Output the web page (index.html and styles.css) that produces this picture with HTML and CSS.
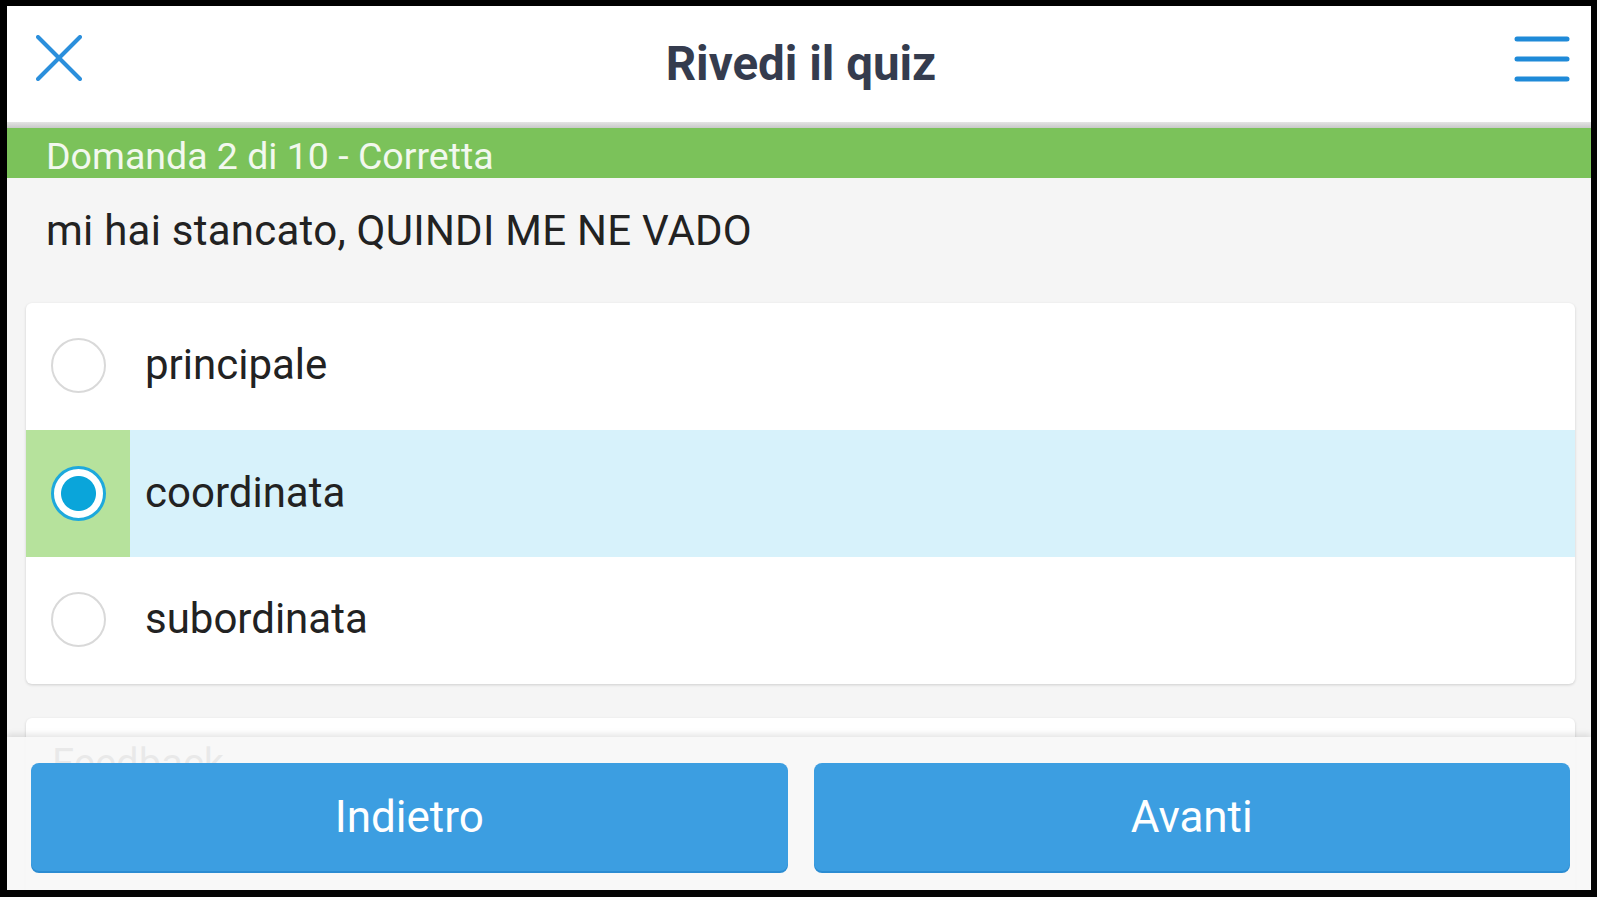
FILE: index.html
```html
<!DOCTYPE html>
<html lang="it">
<head>
<meta charset="utf-8">
<title>Rivedi il quiz</title>
<link rel="stylesheet" href="styles.css">
</head>
<body>
<div class="frame">
  <div class="app">
    <header class="topbar">
      <svg class="icon-close" width="46" height="46" viewBox="0 0 46 46">
        <line x1="2" y1="2" x2="44" y2="44" stroke="#2b8fdc" stroke-width="4" stroke-linecap="round"/>
        <line x1="44" y1="2" x2="2" y2="44" stroke="#2b8fdc" stroke-width="4" stroke-linecap="round"/>
      </svg>
      <h1 class="title">Rivedi il quiz</h1>
      <svg class="icon-menu" width="56" height="50" viewBox="0 0 56 50">
        <line x1="3" y1="5" x2="53" y2="5" stroke="#1f8ad8" stroke-width="5" stroke-linecap="round"/>
        <line x1="3" y1="25" x2="53" y2="25" stroke="#1f8ad8" stroke-width="5" stroke-linecap="round"/>
        <line x1="3" y1="45" x2="53" y2="45" stroke="#1f8ad8" stroke-width="5" stroke-linecap="round"/>
      </svg>
    </header>
    <div class="divider"></div>
    <div class="status">Domanda 2 di 10 - Corretta</div>
    <main class="content">
      <p class="question">mi hai stancato, QUINDI ME NE VADO</p>
      <div class="card options">
        <div class="option">
          <div class="opt-mark"><span class="radio"></span></div>
          <div class="opt-label">principale</div>
        </div>
        <div class="option selected">
          <div class="opt-mark correct"><span class="radio checked"></span></div>
          <div class="opt-label">coordinata</div>
        </div>
        <div class="option">
          <div class="opt-mark"><span class="radio"></span></div>
          <div class="opt-label">subordinata</div>
        </div>
      </div>
      <div class="card feedback">
        <div class="feedback-title">Feedback</div>
      </div>
    </main>
    <footer class="footer">
      <button class="btn">Indietro</button>
      <button class="btn">Avanti</button>
    </footer>
  </div>
</div>
</body>
</html>
```

FILE: styles.css
```css
* { box-sizing: border-box; }
html, body { margin: 0; padding: 0; background: #fafafa; }
body { width: 1600px; height: 900px; overflow: hidden; font-family: Roboto, "Liberation Sans", sans-serif; }

.frame {
  width: 1597px;
  height: 897px;
  border-style: solid;
  border-color: #000;
  border-width: 6px 6px 7px 7px;
}

.app {
  position: relative;
  width: 1584px;
  height: 884px;
  background: #f5f5f5;
  overflow: hidden;
  display: flex;
  flex-direction: column;
}

.topbar {
  height: 116px;
  background: #ffffff;
  display: flex;
  justify-content: space-between;
  align-items: center;
  padding: 0 21px 0 29px;
  flex: none;
}
.icon-close { align-self: flex-start; margin-top: 29px; }
.icon-menu { align-self: flex-start; margin-top: 28px; }
.title {
  margin: 0 0 0 6px;
  font-size: 47.5px;
  font-weight: 700;
  color: #353c4e;
}

.divider {
  height: 6px;
  background: linear-gradient(#e4e4e4, #c9c9c9);
  flex: none;
}

.status {
  height: 50px;
  background: #7bc25a;
  color: #f2f8ee;
  font-size: 37.5px;
  line-height: 50px;
  padding: 3px 0 0 39px;
  flex: none;
}

.content {
  flex: 1;
  padding: 28px 16px 0 19px;
}

.question {
  margin: 0 0 47px 20px;
  font-size: 42px;
  letter-spacing: 0.25px;
  line-height: 50px;
  color: #222222;
}

.card {
  background: #ffffff;
  border-radius: 6px;
  box-shadow: 0 1px 3px rgba(0,0,0,0.16);
}

.options { overflow: hidden; }

.option {
  display: flex;
  height: 127px;
  align-items: stretch;
}
.option.selected { background: #d7f2fb; }

.opt-mark {
  width: 104px;
  display: flex;
  align-items: center;
  justify-content: center;
  padding-bottom: 2px;
  flex: none;
}
.opt-mark.correct { background: #b6e29c; padding-bottom: 0; }

.radio {
  width: 55px;
  height: 55px;
  border-radius: 50%;
  border: 2px solid #d9d9d9;
  background: #ffffff;
}
.radio.checked {
  border: 3px solid #1ea9dc;
  background: radial-gradient(circle, #0aa5da 0 17px, #ffffff 18px);
}

.opt-label {
  display: flex;
  align-items: center;
  padding: 0 0 4px 15px;
  font-size: 42px;
  color: #222222;
}
.selected .opt-label { padding-bottom: 2px; }

.feedback {
  margin-top: 34px;
  height: 200px;
  padding: 22px 26px;
}
.feedback-title {
  font-size: 40px;
  line-height: 48px;
  color: #333333;
}

.footer {
  position: absolute;
  left: 0;
  right: 0;
  bottom: 0;
  height: 153px;
  background: rgba(248,248,248,0.93);
  box-shadow: 0 -3px 6px rgba(0,0,0,0.10);
  display: flex;
  gap: 26px;
  padding: 26px 21px 19px 24px;
}

.btn {
  flex: 1;
  border: none;
  border-radius: 8px;
  background: #3c9ee1;
  box-shadow: 0 2px 0 #2b8cd2;
  color: #ffffff;
  font-family: Roboto, "Liberation Sans", sans-serif;
  font-size: 44px;
  padding: 0;
}
```
